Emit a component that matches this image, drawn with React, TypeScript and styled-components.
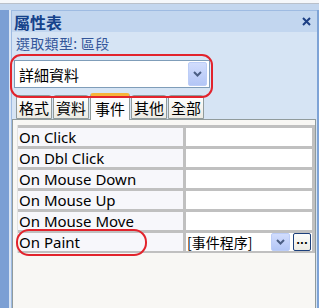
import React from 'react';
import styled, { createGlobalStyle } from 'styled-components';

const GlobalStyle = createGlobalStyle`
  html, body {
    margin: 0;
    padding: 0;
  }
  body {
    width: 319px;
    height: 308px;
    overflow: hidden;
    font-family: "Noto Sans", "Noto Sans CJK TC", sans-serif;
  }
`;

const cjk = `"Noto Sans CJK TC", "Noto Sans", sans-serif`;

const Frame = styled.div`
  position: relative;
  width: 319px;
  height: 308px;
  display: flex;
  flex-direction: column;
  overflow: hidden;
  background: #c3d6ee;
`;

const TopStrip = styled.div`
  height: 3px;
  flex: none;
  background: #f5f7fa;
  border-bottom: 1px solid #b9c0ca;
  margin-bottom: 6px;
`;

const Main = styled.div`
  flex: 1;
  display: flex;
  min-height: 0;
`;

const LeftEdge = styled.div`
  width: 9px;
  flex: none;
  background: #7b9fd4;
  border-right: 2px solid #dbe6f4;
`;

const RightEdge = styled.div`
  width: 3px;
  flex: none;
  background: #7ea3d6;
`;

const Panel = styled.div`
  flex: 1;
  display: flex;
  flex-direction: column;
  background: #d6e4f4;
  border-top: 1px solid #9ebbe2;
  border-left: 1px solid #9ebbe2;
`;

const TitleBar = styled.div`
  height: 21px;
  display: flex;
  align-items: center;
  justify-content: space-between;
  padding: 0 6px 0 2px;
  background: #c2d6ef;
  color: #15428b;
  font-family: ${cjk};
  font-weight: 700;
  font-size: 16px;
`;

const Subtitle = styled.div`
  height: 22px;
  display: flex;
  align-items: center;
  padding-left: 4px;
  color: #34569a;
  font-family: ${cjk};
  font-size: 14px;
  letter-spacing: 0.3px;
`;

const Combo = styled.div`
  margin: 6px 0 0 2px;
  width: 188px;
  height: 26px;
  display: flex;
  align-items: center;
  justify-content: space-between;
  padding: 0 2px 0 4px;
  background: #fff;
  border: 1px solid #7f9db9;
  font-family: ${cjk};
  font-size: 15px;
  color: #000;
`;

const DropButton = styled.div<{ $h: number }>`
  width: 19px;
  height: ${p => p.$h}px;
  display: flex;
  align-items: center;
  justify-content: center;
  box-sizing: border-box;
  border: 1px solid #bccdf7;
  border-radius: 2px;
  background: linear-gradient(#d2ddfd, #b3c6f6);
`;

const Tabs = styled.div`
  margin: 5px 0 0 4px;
  height: 26px;
  display: flex;
  align-items: flex-end;
  gap: 1px;
  position: relative;
  z-index: 1;
`;

const Tab = styled.div<{ $active?: boolean }>`
  height: ${p => (p.$active ? 27 : 24)}px;
  box-sizing: border-box;
  padding: 0 ${p => (p.$active ? 4 : 2)}px;
  margin-bottom: ${p => (p.$active ? -1 : 0)}px;
  display: flex;
  align-items: center;
  font-family: ${cjk};
  font-size: 15px;
  color: #000;
  border: 1px solid #919b9c;
  border-bottom: ${p => (p.$active ? 'none' : '1px solid #919b9c')};
  border-top: ${p => (p.$active ? '3px solid #f6b43b' : '1px solid #919b9c')};
  border-radius: 3px 3px 0 0;
  background: ${p => (p.$active ? '#fcfcfe' : 'linear-gradient(#ffffff, #ecebe4)')};
`;

const Content = styled.div`
  flex: 1;
  margin: 0 1px 0 0;
  background: #f8f7f4;
  border: 1px solid #919b9c;
  border-bottom: none;
  padding: 5px 0 0 4px;
`;

const Grid = styled.div`
  display: grid;
  grid-template-columns: 165px 126px;
  gap: 3px;
  width: max-content;
  padding: 3px 3px 2px 0;
  background: #c0c0c0;
  border-left: 1px solid #e2e2e2;
`;

const Label = styled.div`
  height: 18px;
  display: flex;
  align-items: center;
  padding-left: 1px;
  background: #f7f7fb;
  font-family: "Noto Sans", sans-serif;
  font-size: 15px;
  color: #000;
  white-space: nowrap;
`;

const Value = styled.div`
  height: 18px;
  display: flex;
  align-items: center;
  gap: 3px;
  padding-left: 1px;
  background: #fff;
  font-family: ${cjk};
  font-size: 14px;
  color: #000;
`;

const ValueText = styled.span`
  flex: 1;
`;

const Builder = styled.div`
  width: 18px;
  height: 18px;
  box-sizing: border-box;
  margin-right: 1px;
  display: flex;
  align-items: center;
  justify-content: center;
  border: 1px solid #1c3f7a;
  border-radius: 2px;
  background: linear-gradient(#fdfdfb, #ecebe4);
  font-family: "DejaVu Sans", sans-serif;
  font-weight: 700;
  font-size: 10px;
  line-height: 1;
  padding-bottom: 3px;
`;

const Mark = styled.div<{ $x: number; $y: number; $w: number; $h: number; $r: number }>`
  position: absolute;
  left: ${p => p.$x}px;
  top: ${p => p.$y}px;
  width: ${p => p.$w}px;
  height: ${p => p.$h}px;
  box-sizing: border-box;
  border: 2px solid #e2232c;
  border-radius: ${p => p.$r}px;
  pointer-events: none;
  z-index: 2;
`;

const Chevron = () => (
  <svg width="9" height="6" viewBox="0 0 9 6">
    <path d="M1 1 L4.5 4.5 L8 1" fill="none" stroke="#4b5e84" strokeWidth="2" />
  </svg>
);

const CloseIcon = () => (
  <svg width="9" height="9" viewBox="0 0 9 9">
    <path d="M1 1 L8 8 M8 1 L1 8" stroke="#1d3f84" strokeWidth="2" />
  </svg>
);

const events = ['On Click', 'On Dbl Click', 'On Mouse Down', 'On Mouse Up', 'On Mouse Move', 'On Paint'];
const tabs = ['格式', '資料', '事件', '其他', '全部'];

export default function App() {
  return (
    <Frame>
      <GlobalStyle />
      <TopStrip />
      <Main>
        <LeftEdge />
        <Panel>
          <TitleBar>
            <span>屬性表</span>
            <CloseIcon />
          </TitleBar>
          <Subtitle>選取類型: 區段</Subtitle>
          <Combo>
            <span>詳細資料</span>
            <DropButton $h={24}>
              <Chevron />
            </DropButton>
          </Combo>
          <Tabs>
            {tabs.map(t => (
              <Tab key={t} $active={t === '事件'}>
                {t}
              </Tab>
            ))}
          </Tabs>
          <Content>
            <Grid>
              {events.map(e => (
                <React.Fragment key={e}>
                  <Label>{e}</Label>
                  <Value>
                    {e === 'On Paint' && (
                      <>
                        <ValueText>[事件程序]</ValueText>
                        <DropButton $h={18}>
                          <Chevron />
                        </DropButton>
                        <Builder>...</Builder>
                      </>
                    )}
                  </Value>
                </React.Fragment>
              ))}
            </Grid>
          </Content>
        </Panel>
        <RightEdge />
      </Main>
      <Mark $x={10} $y={54} $w={203} $h={44} $r={11} />
      <Mark $x={16} $y={229} $w={131} $h={27} $r={13} />
    </Frame>
  );
}
